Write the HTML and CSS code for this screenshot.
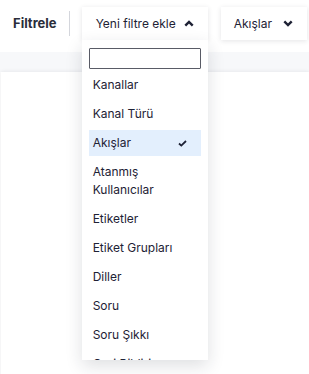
FILE: index.html
```html
<!DOCTYPE html>
<html lang="tr">
<head>
    <meta charset="UTF-8">
    <meta name="viewport" content="width=device-width, initial-scale=1.0">
    <title>Filtrele</title>
    <link rel="stylesheet" href="styles.css">
</head>
<body>
    <div class="toolbar">
        <span class="toolbar-title">Filtrele</span>
        <span class="divider"></span>

        <div class="filter-add">
            <button class="filter-btn open">
                Yeni filtre ekle
                <svg class="chevron" width="10" height="7" viewBox="0 0 10 7"><path d="M1.3 5.6 L5 1.9 L8.7 5.6" fill="none" stroke="#1e2235" stroke-width="2.4"/></svg>
            </button>
            <div class="dropdown">
                <input type="text" class="dropdown-search">
                <ul class="dropdown-list">
                    <li>Kanallar</li>
                    <li>Kanal Türü</li>
                    <li class="selected">Akışlar
                        <svg width="9" height="7" viewBox="0 0 9 7"><path d="M1 3.5 L3.3 5.6 L8 1" fill="none" stroke="#1e2235" stroke-width="1.8"/></svg>
                    </li>
                    <li>Atanmış<br>Kullanıcılar</li>
                    <li>Etiketler</li>
                    <li>Etiket Grupları</li>
                    <li>Diller</li>
                    <li>Soru</li>
                    <li>Soru Şıkkı</li>
                    <li>Geri Bildirim</li>
                </ul>
            </div>
        </div>

        <button class="filter-btn chip">
            Akışlar
            <svg class="chevron" width="10" height="7" viewBox="0 0 10 7"><path d="M1.3 1.4 L5 5.1 L8.7 1.4" fill="none" stroke="#1e2235" stroke-width="2.4"/></svg>
        </button>
    </div>

    <div class="band"></div>
    <div class="card"></div>
</body>
</html>
```

FILE: styles.css
```css
* {
    box-sizing: border-box;
    margin: 0;
    padding: 0;
    font-family: Inter, "Noto Sans", sans-serif;
}

body {
    background-color: #fff;
    color: #1e2235;
    overflow: hidden;
}

.toolbar {
    height: 52px;
    display: flex;
    align-items: flex-start;
    padding: 7px 0 0 13px;
    background-color: #fff;
    position: relative;
    z-index: 2;
}

.toolbar-title {
    font-size: 13px;
    font-weight: 700;
    line-height: 33px;
    color: #2a2d3a;
}

.divider {
    width: 1px;
    height: 25px;
    margin: 4px 12px 0 12px;
    background-color: #d4d6dc;
}

.filter-add {
    position: relative;
}

.filter-btn {
    height: 33px;
    display: flex;
    align-items: center;
    justify-content: space-between;
    background-color: #fff;
    border: none;
    font-size: 12px;
    color: #1e2235;
    box-shadow: 0 1px 5px rgba(30, 34, 53, 0.12);
}

.filter-btn.open {
    width: 126px;
    padding: 0 14px 0 14px;
}

.chip {
    width: 86px;
    margin-left: 13px;
    padding: 0 14px 0 13px;
}

.dropdown {
    position: absolute;
    top: 33px;
    left: 0;
    width: 126px;
    height: 320px;
    overflow: hidden;
    background-color: #fff;
    padding: 8px 7px 0 7px;
    box-shadow: 0 6px 16px rgba(30, 34, 53, 0.14);
}

.dropdown-search {
    display: block;
    width: 100%;
    height: 21px;
    border: 1px solid #595b66;
    border-radius: 1px;
    margin-bottom: 3px;
}

.dropdown-list {
    list-style: none;
}

.dropdown-list li {
    display: flex;
    align-items: center;
    justify-content: space-between;
    padding: 4px 14px 4px 4px;
    margin-bottom: 3px;
    font-size: 12px;
    line-height: 18px;
    color: #1e2235;
}

.dropdown-list li.selected {
    background-color: #e3effd;
}

.band {
    height: 20px;
    background-color: #f7f8fa;
}

.card {
    height: 320px;
    margin-left: 1px;
    background-color: #fff;
    box-shadow: 0 0 4px rgba(30, 34, 53, 0.1);
}
```
